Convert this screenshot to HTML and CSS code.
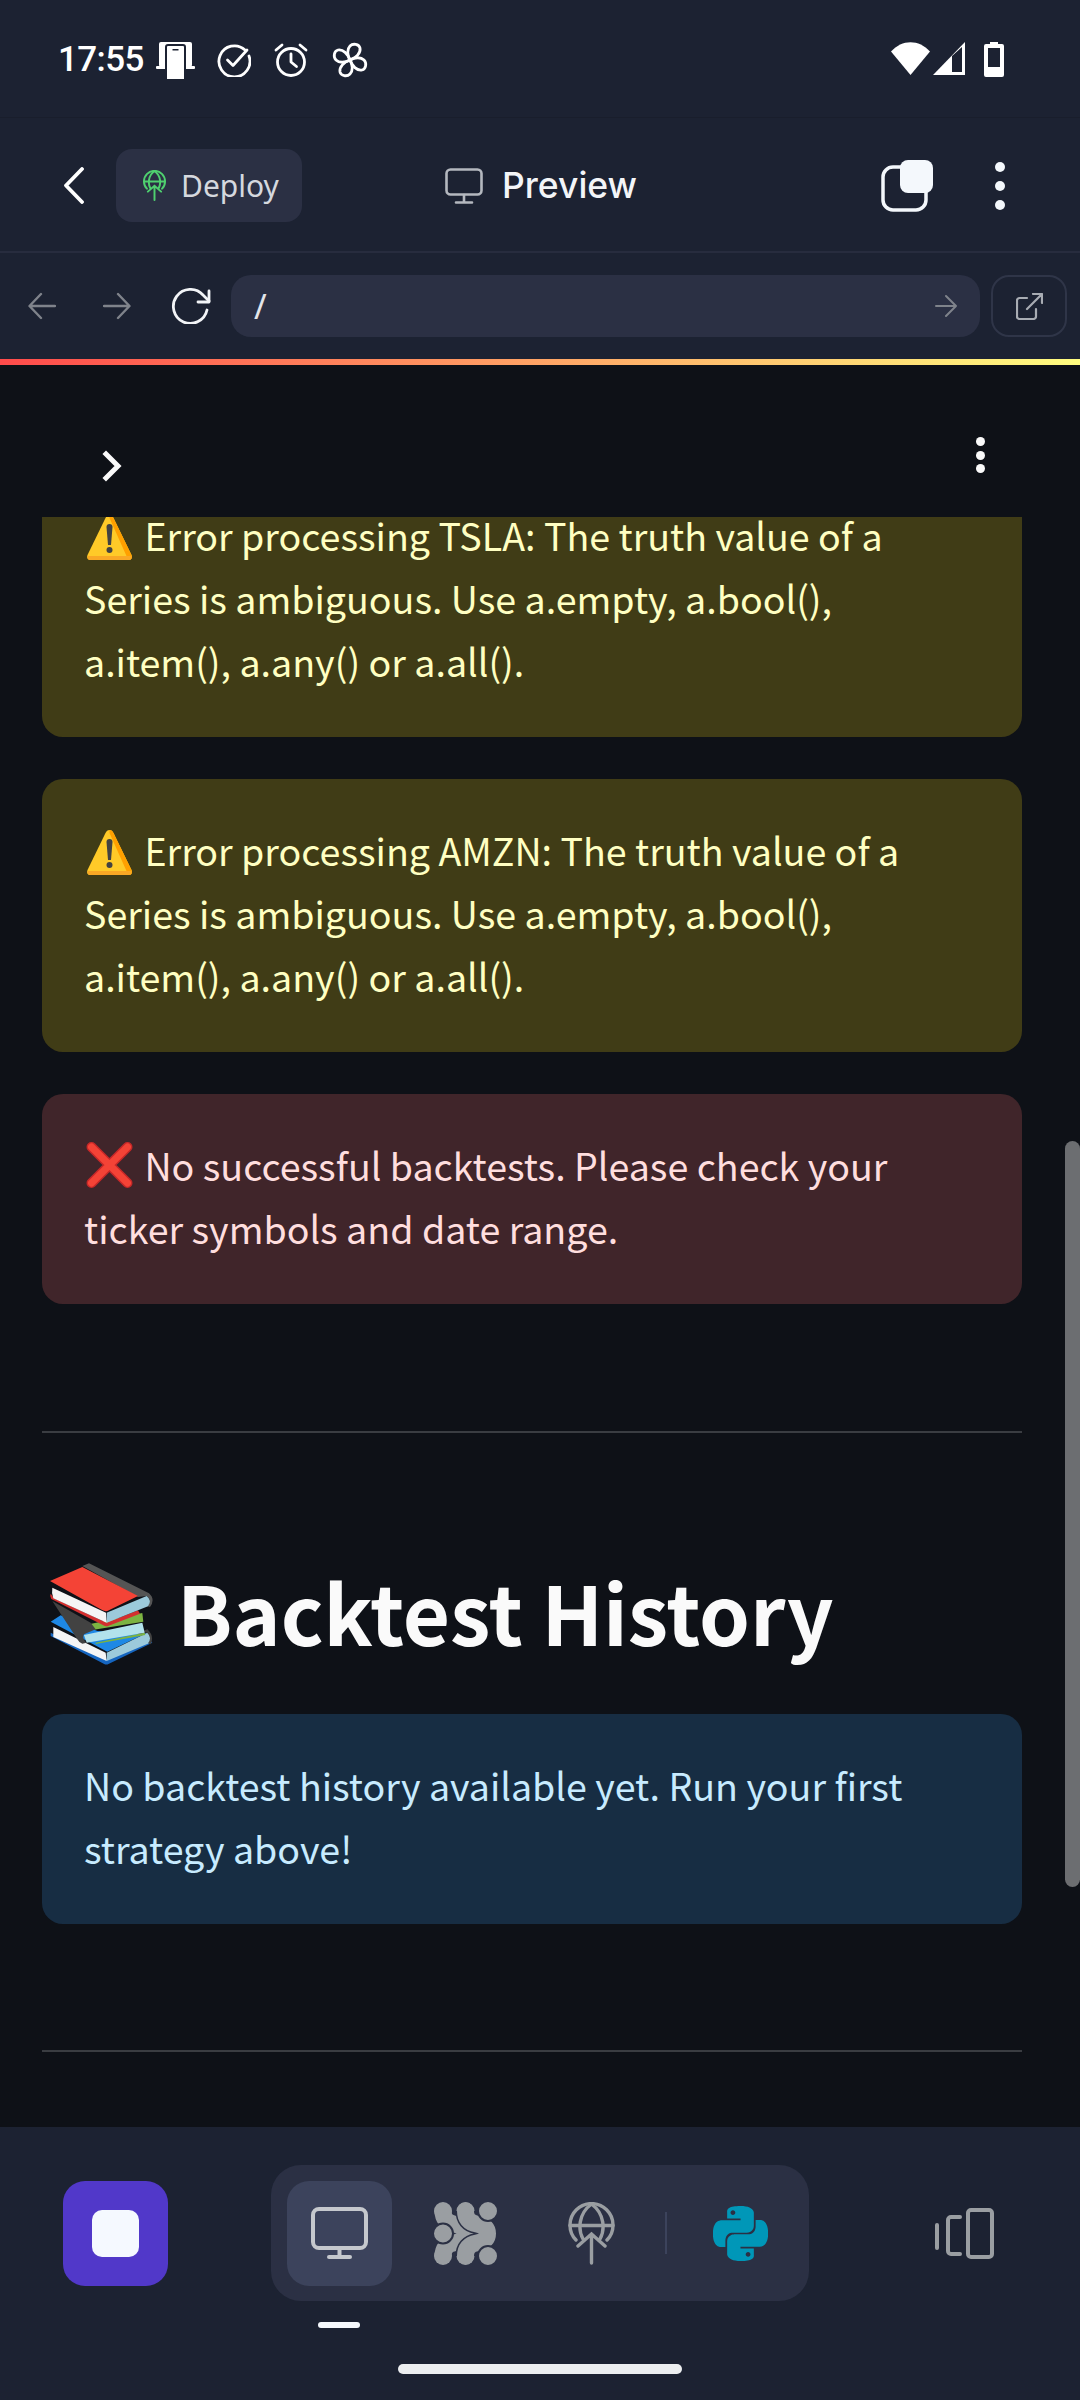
FILE: index.html
```html
<!DOCTYPE html>
<html lang="en">
<head>
<meta charset="utf-8">
<title>Preview</title>
<link rel="stylesheet" href="styles.css">
</head>
<body>
<div class="app">
  <header class="status">
    <div class="status-left">
      <span class="time">17:55</span>
      <svg class="ic-cast" viewBox="0 0 39 37"><rect x="3" y="0" width="33" height="25" rx="2" fill="#fff"/><rect x="0" y="24" width="39" height="3" rx="1" fill="#fff"/><rect x="10" y="3" width="19" height="36" rx="2" fill="#fff" stroke="#1c2232" stroke-width="2"/><rect x="16.500" y="7" width="6" height="1.500" fill="#1c2232"/></svg>
      <svg class="ic-s" viewBox="0 0 34 34" fill="none" stroke="#fff" stroke-width="2.800" stroke-linecap="round" stroke-linejoin="round"><path d="M28 7A15.500 15.500 0 1 0 32 13"/><path d="M10.500 17l5.500 5.500L30 7"/></svg>
      <svg class="ic-s" viewBox="0 0 34 34" fill="none" stroke="#fff" stroke-width="2.800" stroke-linecap="round" stroke-linejoin="round"><circle cx="17" cy="19" r="13.500"/><path d="M17 11v8l5.500 4.500M2 7l6-5M32 7l-6-5"/></svg>
      <svg class="ic-s ic-fan" viewBox="0 0 36 36" fill="none" stroke="#fff" stroke-width="2.800" stroke-linejoin="round"><path d="M18 18C15 13 15 7 18 4c3-3 9-2 10 2 1 5-4 10-10 12z"/><path d="M18 18C15 13 15 7 18 4c3-3 9-2 10 2 1 5-4 10-10 12z" transform="rotate(90 18 18)"/><path d="M18 18C15 13 15 7 18 4c3-3 9-2 10 2 1 5-4 10-10 12z" transform="rotate(180 18 18)"/><path d="M18 18C15 13 15 7 18 4c3-3 9-2 10 2 1 5-4 10-10 12z" transform="rotate(270 18 18)"/></svg>
    </div>
    <div class="status-right">
      <svg class="ic-wifi" viewBox="0 0 39 33"><path d="M0 9.500C11-3 28-3 39 9.500L19.500 33z" fill="#fff"/></svg>
      <svg class="ic-signal" viewBox="0 0 32 33"><path d="M32 0V33H0z" fill="#fff"/><path d="M19 14L29 5V30H19z" fill="#1c2232"/></svg>
      <svg class="ic-batt" viewBox="0 0 20 35"><path d="M6 0h8v2h4a2 2 0 0 1 2 2v29a2 2 0 0 1-2 2H2a2 2 0 0 1-2-2V4a2 2 0 0 1 2-2h4z" fill="#fff"/><rect x="4" y="6" width="12" height="19" fill="#1c2232"/></svg>
    </div>
  </header>

  <nav class="appbar">
    <div class="appbar-left">
      <svg class="ic-back" viewBox="0 0 20 37" fill="none" stroke="#fff" stroke-width="3.800" stroke-linecap="round" stroke-linejoin="round"><path d="M18 2L2 18.500 18 35"/></svg>
      <button class="deploy">
        <svg class="ic-deploy" viewBox="0 0 47 63" fill="none" stroke="#4fd06f" stroke-width="4" stroke-linecap="round"><path d="M8 38A21.500 21.500 0 1 1 39 38"/><path d="M23.500 2C10 12 10 28 15 37M23.500 2C37 12 37 28 32 37M2 23.500H45M23.500 61V32M10 44L23.500 32 37 44"/></svg>
        <span>Deploy</span>
      </button>
    </div>
    <div class="appbar-title">
      <svg class="ic-preview" viewBox="0 0 38 36" fill="none" stroke="#b4b8bf" stroke-width="2.600" stroke-linecap="round"><rect x="1.500" y="1.500" width="35" height="25" rx="4"/><path d="M19 27v7M11 34.500h16"/></svg>
      <span>Preview</span>
    </div>
    <div class="appbar-right">
      <svg class="ic-tabs" viewBox="0 0 52 52"><rect x="2" y="7" width="43" height="43" rx="10" fill="none" stroke="#f4f8fc" stroke-width="3.500"/><rect x="19" y="0" width="33" height="33" rx="8" fill="#f4f8fc"/></svg>
      <span class="dots"><i></i><i></i><i></i></span>
    </div>
  </nav>

  <div class="urlbar">
    <svg class="ic-arrow" viewBox="0 0 28 28" fill="none" stroke="#7f838b" stroke-width="2.400" stroke-linecap="round" stroke-linejoin="round"><path d="M27 14H2M13 2L1.500 14 13 26"/></svg>
    <svg class="ic-arrow" viewBox="0 0 28 28" fill="none" stroke="#7f838b" stroke-width="2.400" stroke-linecap="round" stroke-linejoin="round"><path d="M1 14H26M15 2l11.500 12L15 26"/></svg>
    <svg class="ic-reload" viewBox="0 0 40 36" fill="none" stroke="#f2f4f7" stroke-width="2.800" stroke-linecap="round" stroke-linejoin="round"><path d="M36 22A17 17 0 1 1 32 7l6 6"/><path d="M38 3V14H27"/></svg>
    <div class="url-input">
      <span class="url-path">/</span>
      <svg class="ic-go" viewBox="0 0 22 24" fill="none" stroke="#7f838b" stroke-width="2" stroke-linecap="round" stroke-linejoin="round"><path d="M1 12H21M11 2l10 10-10 10"/></svg>
    </div>
    <button class="open-ext">
      <svg class="ic-ext" viewBox="0 0 27 27" fill="none" stroke="#a8acb3" stroke-width="2.200" stroke-linecap="round" stroke-linejoin="round"><path d="M11 5H3.500A2.500 2.500 0 0 0 1 7.500v16A2.500 2.500 0 0 0 3.500 26h14a2.500 2.500 0 0 0 2.500-2.500V16M11 16L26 1M17 1h9v9"/></svg>
    </button>
  </div>
  <div class="rainbow"></div>

  <main class="content">
    <div class="content-head">
      <svg class="ic-chev" viewBox="0 0 20 32" fill="none" stroke="#fafafa" stroke-width="5" stroke-linecap="square"><path d="M4 4l12 12L4 28"/></svg>
      <span class="dots dots-small"><i></i><i></i><i></i></span>
    </div>
    <div class="feed">
      <div class="feed-inner">
        <div class="alert warn"><svg class="emoji" viewBox="0 0 46 46"><path d="M23 0c2 0 3 1 4 3l18 37c1 3 0 5-3 5H4c-3 0-4-2-3-5L19 3c1-2 2-3 4-3z" fill="#ffca28"/><path d="M23 0c2 0 3 1 4 3l18 37c1 3 0 5-3 5h-4c2 0 3-1 2-4L23 3z" fill="#ffa000"/><path d="M1 41c0 3 1 4 3 4h38c2 0 3-1 3-4H1z" fill="#f9a825"/><path d="M20 12a3 3 0 0 1 6 0l-1.500 18h-3z" fill="#424242"/><circle cx="23" cy="35" r="3" fill="#424242"/></svg> Error processing TSLA: The truth value of a Series is ambiguous. Use a.empty, a.bool(), a.item(), a.any() or a.all().</div>
        <div class="alert warn"><svg class="emoji" viewBox="0 0 46 46"><path d="M23 0c2 0 3 1 4 3l18 37c1 3 0 5-3 5H4c-3 0-4-2-3-5L19 3c1-2 2-3 4-3z" fill="#ffca28"/><path d="M23 0c2 0 3 1 4 3l18 37c1 3 0 5-3 5h-4c2 0 3-1 2-4L23 3z" fill="#ffa000"/><path d="M1 41c0 3 1 4 3 4h38c2 0 3-1 3-4H1z" fill="#f9a825"/><path d="M20 12a3 3 0 0 1 6 0l-1.500 18h-3z" fill="#424242"/><circle cx="23" cy="35" r="3" fill="#424242"/></svg> Error processing AMZN: The truth value of a Series is ambiguous. Use a.empty, a.bool(), a.item(), a.any() or a.all().</div>
        <div class="alert err"><svg class="emoji emoji-x" viewBox="0 0 46 46" fill="none" stroke-linecap="round"><path d="M5 5l36 36M41 5L5 41" stroke="#c62828" stroke-width="10"/><path d="M5 5l36 36M41 5L5 41" stroke="#f44336" stroke-width="7"/></svg> No successful backtests. Please check your ticker symbols and date range.</div>
        <hr class="rule rule-a">
        <h2 class="section-title"><svg class="emoji-books" viewBox="145 100 315 315"><path d="M150 282L180 263 290 310 420 320 440 315 320 372Z" fill="#1e88e5"/><path d="M150 315L320 395 450 340 455 345 325 408Q318 412 312 410L150 325Z" fill="#1565c0"/><path d="M158 298L315 375 318 400 158 328Z" fill="#f5f5f5"/><path d="M318 375L440 315Q458 330 445 347L318 400Z" fill="#9ccadb"/><path d="M420 312L440 305Q462 325 450 350L442 347Q455 330 440 315Z" fill="#424242"/><path d="M265 290L425 256 428 282 270 308Z" fill="#7cb342"/><path d="M285 345L432 315 434 322 285 349Z" fill="#7cb342"/><path d="M250 322L425 285 432 315 258 345Z" fill="#b2e2ec"/><path d="M155 220L270 285 285 305 250 320Q242 333 258 345L245 348Q235 345 230 335Z" fill="#424242"/><path d="M245 115L265 107 445 197Q465 215 448 238L440 236Q455 215 438 205L412 208Z" fill="#555"/><path d="M148 160L245 118 412 205 320 250Q310 252 300 245Z" fill="#f44336"/><path d="M150 198L160 212 318 285 412 248 418 258 322 295Q315 297 308 293L152 214Q146 206 150 198Z" fill="#d32f2f"/><path d="M155 180L316 255 318 285 158 212Q152 196 155 180Z" fill="#f5f5f5"/><path d="M318 255L438 205Q455 218 442 236L318 285Z" fill="#9ccadb"/></svg><span>Backtest History</span></h2>
        <div class="alert info">No backtest history available yet. Run your first strategy above!</div>
        <hr class="rule rule-b">
      </div>
    </div>
    <div class="scrollbar"></div>
  </main>

  <footer class="dock">
    <div class="dock-row">
      <button class="stop"><i></i></button>
      <div class="tabs">
        <div class="tab active">
          <svg class="ic-monitor" viewBox="0 0 57 52" fill="none" stroke="#c5c8cd" stroke-width="4" stroke-linecap="round"><rect x="2" y="2" width="53" height="39" rx="6"/><path d="M28.500 41v9M18 50h21"/></svg>
        </div>
        <div class="tab">
          <svg class="ic-dots" viewBox="0 0 63 63" fill="none">
            <g fill="#9a9ea2"><circle cx="9" cy="9" r="9"/><circle cx="9" cy="54" r="9"/><circle cx="31.500" cy="9" r="9"/><circle cx="31.500" cy="54" r="9"/></g>
            <path d="M9 9Q9 20 20 22Q31 24 31 31.500Q31 39 20 41Q9 43 9 54" stroke="#9a9ea2" stroke-width="17"/>
            <circle cx="9" cy="31.500" r="10" fill="#9a9ea2" stroke="#2b3044" stroke-width="2"/>
            <path d="M31.500 9Q31.500 20 42.500 22Q53.500 24 53.500 31.500Q53.500 39 42.500 41Q31.500 43 31.500 54" stroke="#2b3044" stroke-width="20"/>
            <path d="M31.500 9Q31.500 20 42.500 22Q53.500 24 53.500 31.500Q53.500 39 42.500 41Q31.500 43 31.500 54" stroke="#9a9ea2" stroke-width="17" stroke-linecap="round"/>
            <circle cx="54" cy="9" r="10" fill="#9a9ea2" stroke="#2b3044" stroke-width="2"/>
            <circle cx="54" cy="54" r="10" fill="#9a9ea2" stroke="#2b3044" stroke-width="2"/>
          </svg>
        </div>
        <div class="tab">
          <svg class="ic-globe" viewBox="0 0 47 63" fill="none" stroke="#9a9ea2" stroke-width="3.400" stroke-linecap="round"><path d="M8 38A21.500 21.500 0 1 1 39 38"/><path d="M23.500 2C10 12 10 28 15 37M23.500 2C37 12 37 28 32 37M2 23.500H45M23.500 61V32M10 44L23.500 32 37 44"/></svg>
        </div>
        <span class="tab-sep"></span>
        <div class="tab">
          <svg class="ic-py" viewBox="0 0 24 24"><path fill="#0097b8" d="M14.25.18l.9.2.73.26.59.3.45.32.34.34.25.34.16.33.1.3.04.26.02.2-.01.13V8.5l-.05.63-.13.55-.21.46-.26.38-.3.31-.33.25-.35.19-.35.14-.33.1-.3.07-.26.04-.21.02H8.77l-.69.05-.59.14-.5.22-.41.27-.33.32-.27.35-.2.36-.15.37-.1.35-.07.32-.04.27-.02.21v3.06H3.17l-.21-.03-.28-.07-.32-.12-.35-.18-.36-.26-.36-.36-.35-.46-.32-.59-.28-.73-.21-.88-.14-1.05-.05-1.23.06-1.22.16-1.04.24-.87.32-.71.36-.57.4-.44.42-.33.42-.24.4-.16.36-.1.32-.05.24-.01h.16l.06.01h8.16v-.83H6.18l-.01-2.75-.02-.37.05-.34.11-.31.17-.28.25-.26.31-.23.38-.2.44-.18.51-.15.58-.12.64-.1.71-.06.77-.04.84-.02 1.27.05zm-6.3 1.98l-.23.33-.08.41.08.41.23.34.33.22.41.09.41-.09.33-.22.23-.34.08-.41-.08-.41-.23-.33-.33-.22-.41-.09-.41.09zm13.09 3.95l.28.06.32.12.35.18.36.27.36.35.35.47.32.59.28.73.21.88.14 1.04.05 1.23-.06 1.23-.16 1.04-.24.86-.32.71-.36.57-.4.45-.42.33-.42.24-.4.16-.36.09-.32.05-.24.02-.16-.01h-8.22v.82h5.84l.01 2.76.02.36-.05.34-.11.31-.17.29-.25.25-.31.24-.38.2-.44.17-.51.15-.58.13-.64.09-.71.07-.77.04-.84.01-1.27-.04-1.07-.14-.9-.2-.73-.25-.59-.3-.45-.33-.34-.34-.25-.34-.16-.33-.1-.3-.04-.25-.02-.2.01-.13v-5.34l.05-.64.13-.54.21-.46.26-.38.3-.32.33-.24.35-.2.35-.14.33-.1.3-.06.26-.04.21-.02.13-.01h5.84l.69-.05.59-.14.5-.21.41-.28.33-.32.27-.35.2-.36.15-.36.1-.35.07-.32.04-.28.02-.21V6.07h2.09l.14.01zm-6.47 14.25l-.23.33-.08.41.08.41.23.33.33.23.41.08.41-.08.33-.23.23-.33.08-.41-.08-.41-.23-.33-.33-.23-.41-.08-.41.08z"/></svg>
        </div>
      </div>
      <svg class="ic-panels" viewBox="0 0 59 51" fill="none" stroke="#9a9ea2" stroke-width="4" stroke-linecap="round" stroke-linejoin="round"><path d="M2 17v23"/><path d="M25 9h-9a3 3 0 0 0-3 3v31a3 3 0 0 0 3 3h9"/><rect x="33" y="2" width="24" height="47" rx="3"/></svg>
    </div>
    <span class="tab-marker"></span>
    <span class="home-bar"></span>
  </footer>
</div>
</body>
</html>
```
FILE: styles.css
```css
* { box-sizing: border-box; }
html, body { margin: 0; padding: 0; background: #0e1117; }
svg { display: block; flex: none; }
button { border: 0; padding: 0; margin: 0; font: inherit; color: inherit; background: none; }

.app {
  width: 1080px;
  height: 2400px;
  display: flex;
  flex-direction: column;
  overflow: hidden;
  background: #0e1117;
  font-family: "Noto Sans CJK SC", "Noto Sans", sans-serif;
}

/* status bar */
.status {
  height: 118px;
  flex: none;
  background: #1c2232;
  border-bottom: 1px solid #191e2c;
  display: flex;
  justify-content: space-between;
  align-items: flex-start;
  padding: 42px 76px 0 58px;
}
.status-left { display: flex; align-items: center; height: 36px; }
.status-right { display: flex; align-items: flex-start; }
.time {
  font-family: Roboto, "Noto Sans", sans-serif;
  font-size: 35px;
  line-height: 36px;
  font-weight: 500;
  color: #fff;
  letter-spacing: -0.6px;
  width: 98px;
}
.ic-cast { width: 39px; height: 37px; margin-right: 22px; overflow: hidden; }
.ic-s { width: 34px; height: 34px; margin-right: 23px; }
.ic-s.ic-fan { width: 36px; height: 36px; margin: 0 0 0 1px; }
.ic-wifi { width: 39px; height: 33px; }
.ic-signal { width: 32px; height: 33px; margin-left: 3px; }
.ic-batt { width: 20px; height: 35px; margin-left: 19px; }

/* app bar */
.appbar {
  height: 135px;
  flex: none;
  background: #1c2232;
  border-bottom: 2px solid #272c3e;
  display: grid;
  grid-template-columns: 381px auto 1fr;
  align-items: center;
  padding: 2px 0 0 64px;
}
.appbar-left { display: flex; align-items: center; }
.ic-back { width: 20px; height: 37px; margin-right: 32px; }
.deploy {
  width: 186px;
  height: 73px;
  background: #2b3044;
  border-radius: 16px;
  display: flex;
  align-items: center;
  padding-left: 27px;
  gap: 15px;
  color: #d5d8de;
  font-family: "Noto Sans", sans-serif;
  font-size: 30px;
}
.ic-deploy { width: 23px; height: 31px; }
.appbar-title {
  display: flex;
  align-items: center;
  gap: 19px;
  color: #f3f5f8;
  font-family: Inter, sans-serif;
  font-weight: 500;
  font-size: 35.500px;
}
.ic-preview { width: 38px; height: 36px; }
.appbar-right { display: flex; align-items: center; justify-content: flex-end; padding-right: 75px; gap: 62px; }
.ic-tabs { width: 52px; height: 52px; }
.dots { display: flex; flex-direction: column; gap: 9px; }
.dots i { display: block; width: 10px; height: 10px; border-radius: 50%; background: #f4f8fc; }

/* url bar */
.urlbar {
  height: 106px;
  flex: none;
  background: #1c2232;
  display: flex;
  align-items: flex-start;
  padding: 22px 13px 0 28px;
}
.ic-arrow { width: 28px; height: 28px; margin: 17px 47px 0 0; }
.ic-arrow + .ic-arrow { margin-right: 40px; }
.ic-reload { width: 40px; height: 36px; margin: 13px 20px 0 0; }
.url-input {
  flex: 1;
  height: 62px;
  background: #2b3044;
  border-radius: 20px;
  display: flex;
  align-items: center;
  justify-content: space-between;
  padding: 0 23px;
  color: #e3e5ea;
  font-family: "Noto Sans", sans-serif;
  font-size: 34px;
}
.ic-go { width: 22px; height: 24px; }
.open-ext {
  width: 76px;
  height: 62px;
  margin-left: 11px;
  border: 2px solid #2f3548;
  border-radius: 18px;
  display: flex;
  align-items: center;
  justify-content: center;
}
.ic-ext { width: 27px; height: 27px; }
.rainbow { height: 6px; flex: none; background: linear-gradient(90deg, #ff4b4b, #fffd80); }

/* content */
.content { flex: 1; min-height: 0; display: flex; flex-direction: column; position: relative; }
.content-head {
  height: 152px;
  flex: none;
  display: flex;
  justify-content: space-between;
  padding: 72px 95px 0 102px;
}
.ic-chev { width: 20px; height: 32px; margin-top: 13px; }
.dots-small { gap: 4.500px; }
.dots-small i { width: 9px; height: 9px; background: #fafafa; }
.feed { flex: 1; min-height: 0; overflow: hidden; padding: 0 58px 0 42px; }
.feed-inner { margin-top: -53px; }
.alert {
  border-radius: 21px;
  padding: 39px 42px 45px;
  font-size: 37.600px;
  line-height: 63px;
  margin-bottom: 42px;
}
.warn { background: #403c16; color: #ffffc2; }
.err { background: #40252a; color: #ffdede; }
.info { background: #172d43; color: #c7ebff; margin-bottom: 0; }
.emoji { display: inline-block; width: 47px; height: 46px; margin: 0 3px 0 2px; vertical-align: -10px; }
.emoji-x { vertical-align: -7px; }
.rule { border: 0; height: 2px; background: #3a3d42; margin: 0; }
.rule-a { margin-top: 127px; }
.rule-b { margin-top: 126px; }
.section-title {
  display: flex;
  align-items: center;
  margin: 0;
  height: 281px;
  padding: 74px 0 0 7px;
  font-size: 81.500px;
  line-height: 113px;
  font-weight: 600;
  color: #fafafa;
  gap: 23px;
}
.emoji-books { width: 105px; height: 105px; margin-top: 6px; }
.scrollbar {
  position: absolute;
  right: 0;
  top: 776px;
  width: 15px;
  height: 746px;
  border-radius: 8px;
  background: #6c6e71;
}

/* dock */
.dock {
  height: 273px;
  flex: none;
  background: #1c2232;
  position: relative;
  padding: 38px 0 0 63px;
}
.dock-row { display: flex; align-items: center; }
.stop {
  width: 105px;
  height: 105px;
  border-radius: 22px;
  background: #5138c9;
  display: flex;
  align-items: center;
  justify-content: center;
  margin-right: 103px;
}
.stop i { display: block; width: 47px; height: 47px; border-radius: 10px; background: #f5f9ff; }
.tabs {
  height: 136px;
  border-radius: 30px;
  background: #2b3044;
  display: flex;
  align-items: center;
  gap: 21px;
  padding: 0 16px;
}
.tab { width: 105px; height: 105px; border-radius: 22px; display: flex; align-items: center; justify-content: center; }
.tab.active { background: #3c435c; }
.tab-sep { width: 2px; height: 42px; background: #3c435c; }
.ic-monitor { width: 57px; height: 52px; }
.ic-dots { width: 63px; height: 63px; }
.ic-globe { width: 47px; height: 63px; }
.ic-py { width: 55px; height: 55px; }
.ic-panels { width: 59px; height: 51px; margin-left: 126px; }
.tab-marker { position: absolute; left: 318px; top: 195px; width: 42px; height: 6px; border-radius: 3px; background: #f5f8fc; }
.home-bar { position: absolute; left: 398px; top: 237px; width: 284px; height: 10px; border-radius: 5px; background: #eceef0; }
```
